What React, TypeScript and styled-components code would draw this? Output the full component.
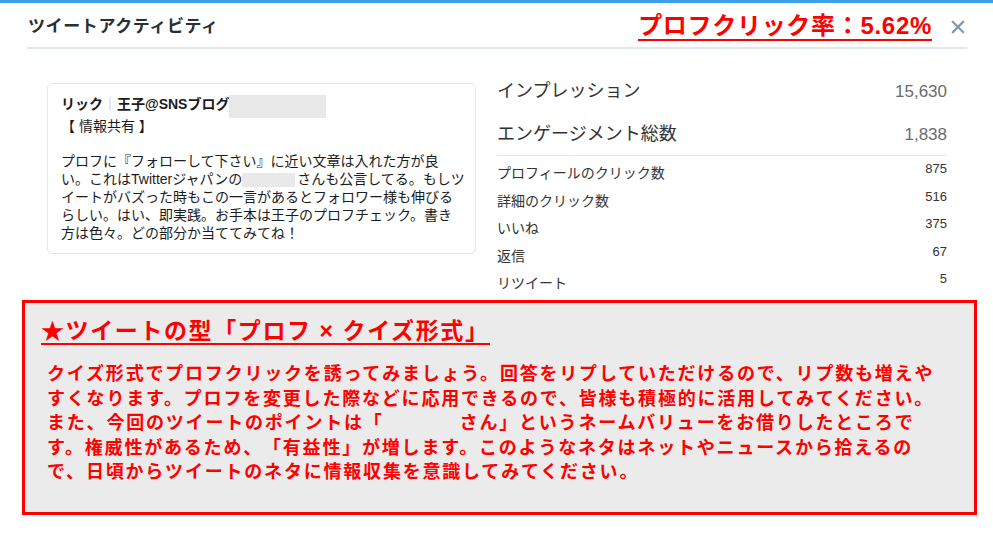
import React from "react";
import styled, { createGlobalStyle } from "styled-components";

const GlobalStyle = createGlobalStyle`
  html, body {
    margin: 0;
    padding: 0;
    background: #ffffff;
  }
  body {
    font-family: "Liberation Sans", "Noto Sans CJK JP", sans-serif;
    color: #222;
    text-spacing-trim: space-all;
  }
  * {
    box-sizing: border-box;
  }
`;

const Page = styled.div`
  width: 993px;
  height: 533px;
  overflow: hidden;
  background: #fff;
`;

const TopBar = styled.div`
  height: 3px;
  background: #3ba0e8;
`;

const Header = styled.header`
  margin: 0 26px 0 27px;
  height: 46px;
  padding-top: 4px;
  display: flex;
  align-items: center;
  border-bottom: 2px solid #e1e8ed;
`;

const Title = styled.h1`
  margin: 0 0 0 1px;
  font-size: 17px;
  line-height: 24px;
  font-weight: 700;
  letter-spacing: 0.6px;
  color: #292f33;
`;

const Rate = styled.div`
  margin-left: auto;
  display: inline-block;
  font-size: 24px;
  line-height: 26px;
  font-weight: 700;
  letter-spacing: 0.7px;
  color: #ff0000;
  border-bottom: 2px solid #ff0000;
`;

const CloseButton = styled.button`
  margin: 0 2px 0 19px;
  padding: 0;
  width: 14px;
  height: 14px;
  border: none;
  background: none;
  display: flex;
  cursor: pointer;
`;

const Main = styled.div`
  display: flex;
  align-items: flex-start;
  gap: 21px;
  margin-top: 21px;
  padding-left: 47px;
`;

const TweetCard = styled.div`
  width: 429px;
  margin-top: 13px;
  padding: 10px 13px 11px;
  border: 1px solid #e1e8ed;
  border-radius: 5px;
  color: #1c1c1c;
`;

const NameRow = styled.div`
  display: flex;
  align-items: flex-start;
  height: 22px;
`;

const Name = styled.span`
  font-size: 14px;
  line-height: 20px;
  font-weight: 700;
`;

const Bar = styled.span`
  color: #b5b5b5;
  font-weight: 400;
`;

const Redact = styled.span<{ $w: number; $h: number }>`
  display: inline-block;
  width: ${(p) => p.$w}px;
  height: ${(p) => p.$h}px;
  background: #e9e9e9;
`;

const NameRedact = styled(Redact)`
  margin: 1px 0 0 0;
`;

const InlineRedact = styled(Redact)`
  vertical-align: -3px;
  margin-right: 2px;
`;

const Tag = styled.div`
  font-size: 14px;
  line-height: 20px;
`;

const TweetBody = styled.p`
  margin: 16px 0 0;
  font-size: 14px;
  line-height: 18px;
  white-space: nowrap;
`;

const Stats = styled.div`
  width: 450px;
`;

const BigRow = styled.div<{ $last?: boolean }>`
  display: flex;
  justify-content: space-between;
  align-items: baseline;
  padding: ${(p) => (p.$last ? "9px 0 8px" : "9px 0")};
  line-height: 24px;
`;

const BigLabel = styled.span`
  font-size: 18px;
  color: #333;
`;

const BigValue = styled.span`
  font-size: 17px;
  color: #6b6b6b;
`;

const SmallList = styled.div`
  border-top: 1px solid #e1e8ed;
  padding-top: 5px;
`;

const SmallRow = styled.div`
  display: flex;
  justify-content: space-between;
  align-items: flex-start;
  height: 27.5px;
`;

const SmallLabel = styled.span`
  font-size: 14px;
  line-height: 25px;
  color: #333;
`;

const SmallValue = styled.span`
  font-size: 13px;
  line-height: 16px;
  color: #333;
`;

const NoteBox = styled.section`
  margin: 1.5px 16px 0 22px;
  height: 215px;
  border: 3px solid #ff0000;
  background: #ebebeb;
  padding-left: 16px;
  color: #ff0000;
`;

const NoteTitle = styled.h2`
  display: inline-block;
  margin: 17px 0 0;
  font-size: 23px;
  line-height: 23px;
  font-weight: 700;
  letter-spacing: 1.6px;
  border-bottom: 2px solid #ff0000;
`;

const NoteBody = styled.p`
  margin: 17px 0 0 6px;
  font-size: 18px;
  line-height: 24.5px;
  font-weight: 700;
  letter-spacing: 1.8px;
  white-space: nowrap;
`;

const Gap = styled.span<{ $w: number }>`
  display: inline-block;
  width: ${(p) => p.$w}px;
`;

const smallStats = [
  { label: "プロフィールのクリック数", value: "875" },
  { label: "詳細のクリック数", value: "516" },
  { label: "いいね", value: "375" },
  { label: "返信", value: "67" },
  { label: "リツイート", value: "5" },
];

const CloseIcon = () => (
  <svg width="14" height="14" viewBox="0 0 14 14">
    <path
      d="M2 2 L12 12 M12 2 L2 12"
      stroke="#8899a6"
      strokeWidth="2.3"
      strokeLinecap="square"
    />
  </svg>
);

const App: React.FC = () => {
  return (
    <Page>
      <GlobalStyle />
      <TopBar />
      <Header>
        <Title>ツイートアクティビティ</Title>
        <Rate>プロフクリック率：5.62%</Rate>
        <CloseButton aria-label="閉じる">
          <CloseIcon />
        </CloseButton>
      </Header>

      <Main>
        <TweetCard>
          <NameRow>
            <Name>
              リック<Bar>｜</Bar>王子@SNSブログ
            </Name>
            <NameRedact $w={97} $h={23} />
          </NameRow>
          <Tag>【 情報共有 】</Tag>
          <TweetBody>
            プロフに『フォローして下さい』に近い文章は入れた方が良
            <br />
            い。これはTwitterジャパンの
            <InlineRedact $w={53} $h={14} />
            さんも公言してる。もしツ
            <br />
            イートがバズった時もこの一言があるとフォロワー様も伸びる
            <br />
            らしい。はい、即実践。お手本は王子のプロフチェック。書き
            <br />
            方は色々。どの部分か当ててみてね！
          </TweetBody>
        </TweetCard>

        <Stats>
          <BigRow>
            <BigLabel>インプレッション</BigLabel>
            <BigValue>15,630</BigValue>
          </BigRow>
          <BigRow $last>
            <BigLabel>エンゲージメント総数</BigLabel>
            <BigValue>1,838</BigValue>
          </BigRow>
          <SmallList>
            {smallStats.map((s) => (
              <SmallRow key={s.label}>
                <SmallLabel>{s.label}</SmallLabel>
                <SmallValue>{s.value}</SmallValue>
              </SmallRow>
            ))}
          </SmallList>
        </Stats>
      </Main>

      <NoteBox>
        <NoteTitle>★ツイートの型「プロフ × クイズ形式」</NoteTitle>
        <NoteBody>
          クイズ形式でプロフクリックを誘ってみましょう。回答をリプしていただけるので、リプ数も増えや
          <br />
          すくなります。プロフを変更した際などに応用できるので、皆様も積極的に活用してみてください。
          <br />
          また、今回のツイートのポイントは「<Gap $w={76} />さん」というネームバリューをお借りしたところで
          <br />
          す。権威性があるため、「有益性」が増します。このようなネタはネットやニュースから拾えるの
          <br />
          で、日頃からツイートのネタに情報収集を意識してみてください。
        </NoteBody>
      </NoteBox>
    </Page>
  );
};

export default App;
